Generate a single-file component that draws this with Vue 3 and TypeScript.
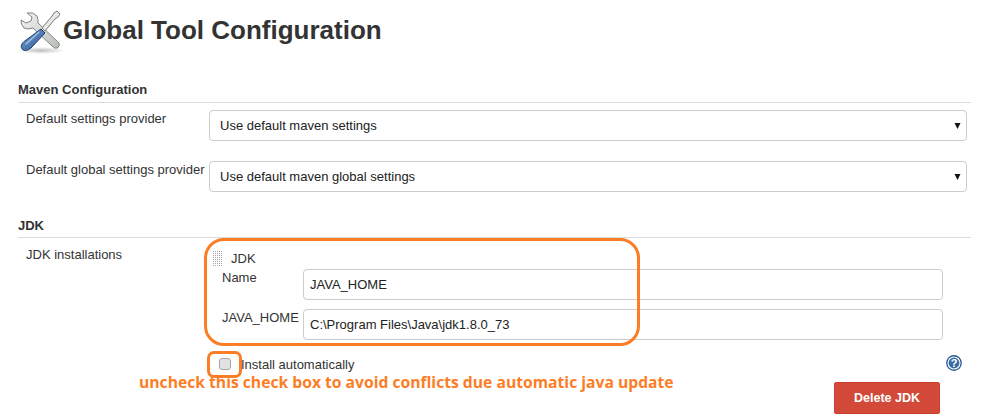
<script setup lang="ts">
import { ref } from "vue";

const mavenRows = ref([
  { label: "Default settings provider", value: "Use default maven settings" },
  { label: "Default global settings provider", value: "Use default maven global settings" },
]);
const jdkName = ref("JAVA_HOME");
const jdkHome = ref("C:\\Program Files\\Java\\jdk1.8.0_73");
const installAuto = ref(false);
</script>

<template>
  <div class="page">
    <h1 class="title">
      <svg class="tools" viewBox="0 0 48 48" width="48" height="48" aria-hidden="true">
        <defs>
          <linearGradient id="steel" x1="0" y1="0" x2="1" y2="1">
            <stop offset="0" stop-color="#f4f5f3" />
            <stop offset="1" stop-color="#b9bdb8" />
          </linearGradient>
          <linearGradient id="handle" x1="0" y1="0" x2="1" y2="1">
            <stop offset="0" stop-color="#7fa9d8" />
            <stop offset="1" stop-color="#24528f" />
          </linearGradient>
          <radialGradient id="shade" cx="0.5" cy="0.5" r="0.5">
            <stop offset="0" stop-color="#000" stop-opacity="0.25" />
            <stop offset="1" stop-color="#000" stop-opacity="0" />
          </radialGradient>
        </defs>
        <ellipse cx="23" cy="44.5" rx="24" ry="3.5" fill="url(#shade)" />
        <path d="M9 7 Q15 5.5 19 10 Q20.5 13.5 20 17 L41 37 Q42 40 39.5 42 Q36.5 43 34 40 L15 22 Q10 24 6 22 Q2.5 18.5 3 14 L8 17 L13 15 L14 11 Z" fill="url(#steel)" stroke="#80847f" stroke-width="1" stroke-linejoin="round" />
        <path d="M36 7 L39 5 L42 8 L40 11 L37 13 L27 25 L24 22 L34 10 Z" fill="#e6e8e4" stroke="#777b76" stroke-width="1" stroke-linejoin="round" />
        <path d="M23 23 L27 27 L13 42 Q8 46 4.5 43.5 Q1.5 40 5.5 36 Z" fill="url(#handle)" stroke="#1d3f70" stroke-width="1" stroke-linejoin="round" />
        <path d="M21 26 L8 38" stroke="#a9c6e8" stroke-width="1.2" stroke-linecap="round" fill="none" />
      </svg>
      <span>Global Tool Configuration</span>
    </h1>

    <section class="section maven">
      <h2 class="section-head">Maven Configuration</h2>
      <div v-for="row in mavenRows" :key="row.label" class="row select-row">
        <label class="row-label">{{ row.label }}</label>
        <div class="select">
          <span>{{ row.value }}</span>
          <svg class="caret" viewBox="0 0 7 6" width="7" height="6" aria-hidden="true">
            <path d="M0.5 0 H6.5 L3.5 6 Z" fill="#111" />
          </svg>
        </div>
      </div>
    </section>

    <section class="section jdk">
      <h2 class="section-head">JDK</h2>
      <div class="row">
        <label class="row-label">JDK installations</label>
        <div class="installation">
          <div class="install-head">
            <span class="grip"></span>
            <span>JDK</span>
          </div>
          <div class="field">
            <label>Name</label>
            <input v-model="jdkName" type="text" />
          </div>
          <div class="field field-home">
            <label>JAVA_HOME</label>
            <input v-model="jdkHome" type="text" />
          </div>
          <div class="install-foot">
            <input id="auto" v-model="installAuto" type="checkbox" class="check" />
            <label for="auto">Install automatically</label>
            <svg class="help" viewBox="0 0 16 16" width="16" height="16" aria-hidden="true">
              <circle cx="8" cy="8" r="7.9" fill="#2a5894" />
              <circle cx="8" cy="8" r="6" fill="#3a6aa6" stroke="#fff" stroke-width="1.1" />
              <text x="8" y="12" text-anchor="middle" class="help-mark">?</text>
            </svg>
          </div>
          <div class="actions">
            <button type="button" class="delete">Delete JDK</button>
          </div>
        </div>
      </div>
    </section>

    <div class="callout callout-box"></div>
    <div class="callout callout-check"></div>
    <p class="note">uncheck this check box to avoid conflicts due automatic java update</p>
  </div>
</template>

<style scoped>
.page {
  position: relative;
  height: 415px;
  overflow: hidden;
  padding: 0 12px 0 18px;
  box-sizing: border-box;
  font-family: "Liberation Sans", Arial, sans-serif;
  font-size: 13px;
  color: #333;
  background: #fff;
}
.title {
  display: flex;
  align-items: center;
  height: 48px;
  margin: 6px 0 0;
  font-size: 26px;
  font-weight: 700;
  color: #333;
}
.tools {
  flex: none;
  margin-right: -3px;
}
.section-head {
  margin: 0;
  height: 19px;
  line-height: 16px;
  font-size: 13px;
  font-weight: 700;
  color: #333;
  border-bottom: 1px solid #ddd;
}
.maven {
  margin-top: 28px;
}
.maven .section-head {
  height: 20px;
}
.jdk {
  margin-top: 26px;
}
.row {
  display: grid;
  grid-template-columns: 183px 1fr;
  padding-left: 8px;
}
.select-row {
  margin-top: 7px;
  height: 31px;
}
.select-row + .select-row {
  margin-top: 20px;
}
.row-label {
  padding-top: 1px;
  line-height: 15px;
}
.select {
  display: flex;
  align-items: center;
  justify-content: space-between;
  box-sizing: border-box;
  height: 31px;
  width: 758px;
  padding: 0 5px 0 10px;
  border: 1px solid #ccc;
  border-radius: 4px;
  color: #222;
}
.jdk .row {
  margin-top: 8px;
}
.installation {
  position: relative;
}
.install-head {
  display: flex;
  align-items: center;
  gap: 8px;
  height: 22px;
  padding-top: 1px;
  padding-left: 3px;
}
.grip {
  flex: none;
  width: 11px;
  height: 16px;
  background-color: #a8a8a8;
  background-image: linear-gradient(#fff 1px, transparent 1px), linear-gradient(90deg, #fff 1px, transparent 1px);
  background-size: 2px 2px;
}
.field {
  display: grid;
  grid-template-columns: 81px 640px;
  padding-left: 13px;
  height: 31px;
}
.field-home {
  margin-top: 9px;
}
.field label {
  padding-top: 1px;
  line-height: 15px;
  color: #333;
}
.field input {
  box-sizing: border-box;
  width: 640px;
  height: 31px;
  padding: 0 6px;
  border: 1px solid #ccc;
  border-radius: 4px;
  font-family: inherit;
  font-size: 13px;
  color: #222;
  outline: none;
}
.install-foot {
  position: relative;
  display: flex;
  align-items: center;
  height: 18px;
  margin-top: 15px;
  padding-left: 10px;
}
.check {
  appearance: none;
  box-sizing: border-box;
  width: 12px;
  height: 12px;
  margin: 0 10px 0 0;
  border: 1px solid #a5a5a5;
  border-radius: 3px;
  background: #e2e2e2;
}
.help {
  position: absolute;
  right: 9px;
  top: 0;
}
.help-mark {
  font-family: "Liberation Sans", Arial, sans-serif;
  font-size: 11px;
  font-weight: 700;
  fill: #fff;
}
.actions {
  display: flex;
  justify-content: flex-end;
  margin-top: 9px;
  padding-right: 31px;
}
.delete {
  width: 106px;
  height: 32px;
  padding: 0;
  border: 1px solid #c8412f;
  border-radius: 2px;
  background: #d24939;
  color: #fff;
  font-family: inherit;
  font-size: 12.5px;
  font-weight: 700;
}
.callout {
  position: absolute;
  box-sizing: border-box;
  border: 3px solid #fb7e27;
}
.callout-box {
  left: 204px;
  top: 238px;
  width: 436px;
  height: 108px;
  border-radius: 20px;
}
.callout-check {
  left: 207px;
  top: 351px;
  width: 35px;
  height: 27px;
  border-radius: 7px;
}
.note {
  position: absolute;
  left: 139px;
  top: 373px;
  margin: 0;
  font-family: "Open Sans", sans-serif;
  font-size: 15.68px;
  font-weight: 700;
  line-height: 18px;
  color: #fb7e27;
  white-space: nowrap;
}
</style>
